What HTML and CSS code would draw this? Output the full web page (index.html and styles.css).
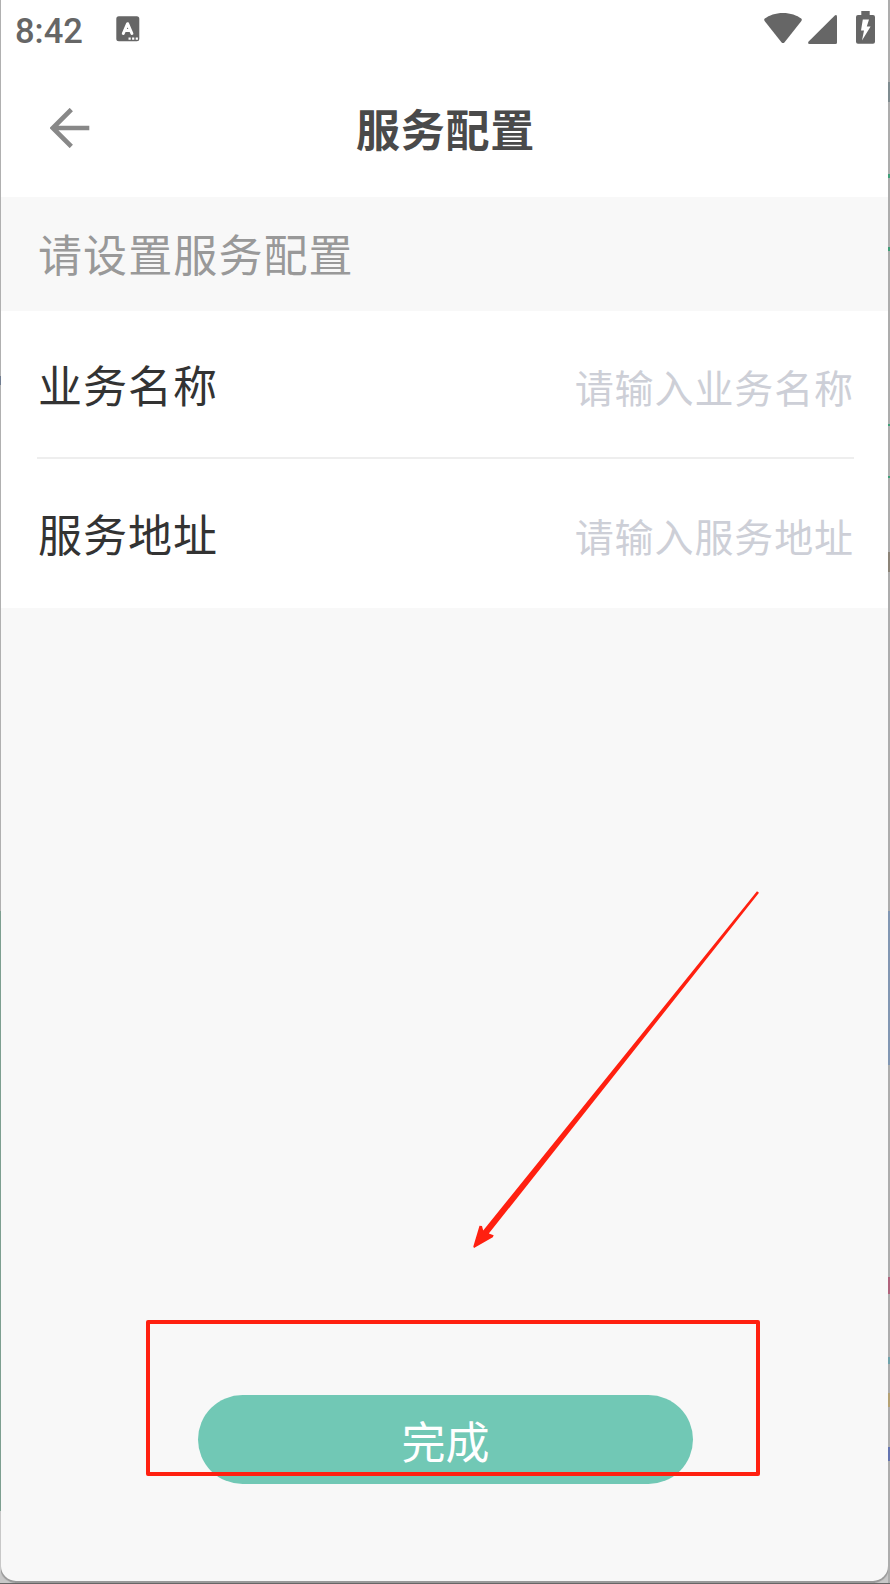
FILE: index.html
```
<!DOCTYPE html>
<html lang="zh-CN">
<head>
<meta charset="UTF-8">
<meta name="viewport" content="width=device-width, initial-scale=1.0">
<title>服务配置</title>
<link rel="stylesheet" href="styles.css">
</head>
<body>
<div class="desktop">
<div class="screen">
    <div class="status-bar">
        <span class="time">8:42</span>
        <svg class="app-icon" width="24" height="26" viewBox="0 0 24 26">
            <rect x="0.3" y="0.3" width="23" height="25" rx="2.5" fill="#666"/>
            <path d="M7.3 17.5 L11.6 7.7 L15.9 17.5 M9 14.4 H14.2" fill="none" stroke="#fff" stroke-width="3" stroke-linecap="round" stroke-linejoin="round"/>
            <path d="M12.5 21.5h2.2v2.2h-2.2zM16.1 21.5h2.2v2.2h-2.2zM19.7 21.5h2.2v2.2h-2.2z" fill="#fff"/>
        </svg>
        <div class="status-icons">
            <svg width="38" height="31" viewBox="0 0 38 31">
                <path d="M19 0 C11.5 0 5 2.3 0.8 5.6 Q-0.3 6.6 0.6 8 L17.6 29.4 Q19 30.8 20.4 29.4 L37.4 8 Q38.3 6.6 37.2 5.6 C33 2.3 26.5 0 19 0Z" fill="#666"/>
            </svg>
            <svg class="signal" width="29" height="29" viewBox="0 0 29 29">
                <path d="M26.8 0.4 L0.4 26.8 Q-0.5 29 1.5 29 H27.5 Q29 29 29 27.5 V1.5 Q28.8 -0.5 26.8 0.4Z" fill="#666"/>
            </svg>
            <svg class="battery" width="19" height="33" viewBox="0 0 19 33">
                <path d="M5.3 0 H13.7 V4 H17 Q19 4 19 6 V30.7 Q19 32.7 17 32.7 H2 Q0 32.7 0 30.7 V6 Q0 4 2 4 H5.3Z" fill="#666"/>
                <path d="M6.8 8.5 H13 L10.8 15.5 H14.6 L6 29.5 L8 19.5 H5Z" fill="#fff"/>
            </svg>
        </div>
    </div>

    <div class="header">
        <svg class="back" width="40" height="40" viewBox="0 0 40 40">
            <path d="M21.3 1.5 L2.8 20 L21.3 38.5 M2.8 20 H39.3" fill="none" stroke="#888" stroke-width="4.6"/>
        </svg>
        <div class="title">服务配置</div>
    </div>

    <div class="tip">请设置服务配置</div>

    <div class="form">
        <div class="row">
            <label class="label" for="name">业务名称</label>
            <input class="input" id="name" type="text" placeholder="请输入业务名称">
        </div>
        <div class="row">
            <label class="label" for="address">服务地址</label>
            <input class="input" id="address" type="text" placeholder="请输入服务地址">
        </div>
    </div>

    <div class="footer">
        <button class="button">完成</button>
    </div>
</div>
</div>

<!-- Annotation: arrow and frame around the button -->
<svg class="annotation" width="890" height="1584" viewBox="0 0 890 1584">
    <path d="M757 891.3 L759 892.8 L488.8 1233.6 L493.7 1235.3 L492.8 1237.3 L474 1248 L473.3 1246.5 L479.5 1225.8 L482 1226 L483.2 1230.5 Z" fill="#ff2010"/>
    <rect x="148" y="1322" width="610" height="152" fill="none" stroke="#ff2010" stroke-width="4" stroke-linejoin="round"/>
</svg>
</body>
</html>
```

FILE: styles.css
```
* {
    box-sizing: border-box;
}

body {
    margin: 0;
    font-family: "Noto Sans CJK SC", sans-serif;
}

/* Windows behind the phone, only a thin strip shows at each side */
.desktop {
    width: 890px;
    height: 1584px;
    padding: 0 2px 3px 1px;
    background:
        linear-gradient(#666, #666) 0 100% / 100% 1px no-repeat,
        linear-gradient(#999, #999) 50% 1581px / 860px 2px no-repeat,
        linear-gradient(#b0b0b0 376px, #6f7c90 376px, #6f7c90 385px, #b0b0b0 385px, #b0b0b0 911px, #7d9f90 911px, #7d9f90 1511px, #c8c8c8 1511px) 0 0 / 1px 100% no-repeat,
        linear-gradient(#adadad 82px, #7f8c90 82px, #7f8c90 102px, #adadad 102px, #adadad 174px, #3f9f78 174px, #3f9f78 178px, #adadad 178px, #adadad 247px, #3f9f78 247px, #3f9f78 251px, #adadad 251px, #adadad 424px, #3f9f78 424px, #3f9f78 426px, #adadad 426px, #adadad 476px, #3f9f78 476px, #3f9f78 478px, #adadad 478px, #adadad 552px, #8c8478 552px, #8c8478 572px, #adadad 572px, #adadad 911px, #8297b3 911px, #8297b3 1065px, #adadad 1065px, #adadad 1277px, #b0647c 1277px, #b0647c 1294px, #adadad 1294px, #adadad 1357px, #6fa3ab 1357px, #6fa3ab 1364px, #adadad 1364px, #adadad 1393px, #b5a274 1393px, #b5a274 1407px, #adadad 1407px, #adadad 1447px, #6474b0 1447px, #6474b0 1461px, #adadad 1461px) 100% 0 / 2px 100% no-repeat,
        #c8c8c8;
}

.screen {
    height: 1581px;
    display: flex;
    flex-direction: column;
    background-color: #f8f8f8;
    border-radius: 0 0 15px 15px;
    box-shadow: 0 1px 1px 1px #999;
    clip-path: inset(0 0 -2px 0);
}

.status-bar {
    height: 60px;
    display: flex;
    align-items: flex-start;
    padding: 0 13px 0 14px;
    background-color: #fff;
}

.time {
    width: 101px;
    padding-top: 1px;
    font-family: Roboto, sans-serif;
    font-size: 34.5px;
    font-weight: 500;
    line-height: 60px;
    color: #666;
}

.app-icon {
    margin-top: 16px;
}

.status-icons {
    display: flex;
    margin-left: auto;
    padding-top: 13px;
}

.signal {
    margin: 2px 19px 0 6px;
}

.battery {
    margin-top: -2px;
}

.header {
    height: 137px;
    display: flex;
    align-items: center;
    padding-left: 49px;
    background-color: #fff;
}

.back {
    margin-bottom: 1px;
}

.title {
    flex: 1;
    padding-right: 87px;
    padding-bottom: 2px;
    text-align: center;
    font-size: 44px;
    font-weight: bold;
    letter-spacing: 0.8px;
    color: #4a4a4a;
}

.tip {
    height: 114px;
    padding-left: 37px;
    font-size: 44px;
    line-height: 112px;
    letter-spacing: 1.1px;
    color: #999;
}

.form {
    height: 297px;
    padding: 0 34px 0 36px;
    background-color: #fff;
}

.row {
    height: 148px;
    display: flex;
    align-items: center;
    justify-content: space-between;
}

.row:first-child {
    border-bottom: 2px solid #eee;
}

.label {
    font-size: 44px;
    letter-spacing: 1px;
    padding-left: 1px;
    padding-bottom: 1px;
    color: #333;
}

.input {
    width: 400px;
    padding: 3px 0 0;
    border: none;
    outline: none;
    background: none;
    text-align: right;
    font-family: inherit;
    font-size: 39px;
    letter-spacing: 0.9px;
}

.input::placeholder {
    color: #cdcfd7;
}

.footer {
    margin-top: auto;
    padding: 0 0 97px 1px;
}

.button {
    display: block;
    width: 495px;
    height: 89px;
    margin: 0 auto;
    padding: 0 0 0 1px;
    border: none;
    border-radius: 45px;
    background-color: #71c8b5;
    font-family: inherit;
    font-size: 44px;
    color: #fff;
}

.annotation {
    position: absolute;
    top: 0;
    left: 0;
    pointer-events: none;
}
```
